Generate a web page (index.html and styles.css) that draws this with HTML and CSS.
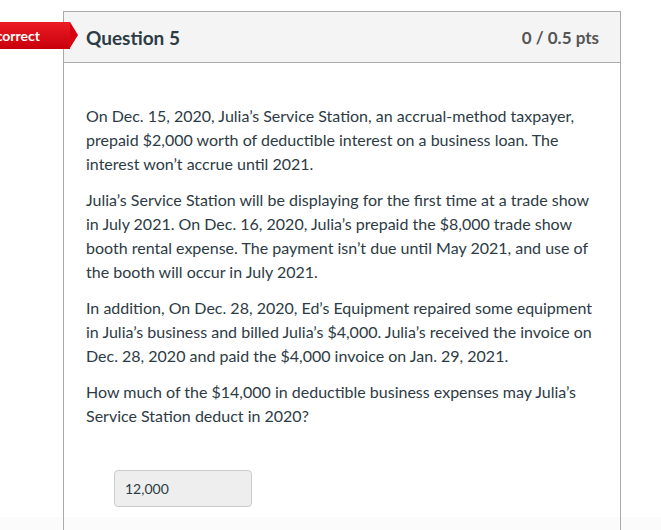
FILE: index.html
```html
<!DOCTYPE html>
<html lang="en">
<head>
  <meta charset="UTF-8">
  <title>Question 5</title>
  <link rel="stylesheet" href="styles.css">
</head>
<body>
  <div class="page">
    <div class="question">
      <div class="flag"><span>Incorrect</span></div>
      <div class="header">
        <span class="title">Question 5</span>
        <span class="pts">0 / 0.5 pts</span>
      </div>
      <div class="text">
        <p>On Dec. 15, 2020, Julia’s Service Station, an accrual-method taxpayer, prepaid $2,000 worth of deductible interest on a business loan. The interest won’t accrue until 2021.</p>
        <p>Julia’s Service Station will be displaying for the first time at a trade show in July 2021. On Dec. 16, 2020, Julia’s prepaid the $8,000 trade show booth rental expense. The payment isn’t due until May 2021, and use of the booth will occur in July 2021.</p>
        <p>In addition, On Dec. 28, 2020, Ed’s Equipment repaired some equipment in Julia’s business and billed Julia’s $4,000. Julia’s received the invoice on Dec. 28, 2020 and paid the $4,000 invoice on Jan. 29, 2021.</p>
        <p>How much of the $14,000 in deductible business expenses may Julia’s Service Station deduct in 2020?</p>
        <div class="answer">
          <div class="box">12,000</div>
        </div>
      </div>
    </div>
  </div>
  <div class="strip"></div>
</body>
</html>
```

FILE: styles.css
```css
body {
  margin: 0;
  background: #fff;
  font-family: Lato, "Noto Sans", sans-serif;
  color: #2d3b45;
  overflow: hidden;
}
.page {
  padding: 11px 0 0 63px;
}
.question {
  position: relative;
  width: 556px;
  border: 1px solid #aaa;
  border-bottom: none;
}
.flag {
  position: absolute;
  left: -64px;
  top: 10px;
  width: 70px;
  height: 27px;
  padding-right: 30px;
  box-sizing: border-box;
  display: flex;
  justify-content: flex-end;
  background: linear-gradient(#ec1c24, #c8000b);
  color: #fff;
  font-size: 14px;
  font-weight: 700;
  line-height: 27px;
  white-space: nowrap;
}
.flag span {
  flex-shrink: 0;
}
.flag::after {
  content: "";
  position: absolute;
  right: -8px;
  top: 0;
  border-left: 8px solid #d9000f;
  border-top: 13.5px solid transparent;
  border-bottom: 13.5px solid transparent;
}
.header {
  display: flex;
  justify-content: space-between;
  align-items: center;
  height: 50px;
  padding: 0 21px 0 22px;
  background: #f4f4f4;
  border-bottom: 1px solid #aaa;
}
.title {
  font-size: 19px;
  font-weight: 700;
  color: #2d3b45;
}
.pts {
  font-size: 17px;
  font-weight: 700;
  color: #555;
}
.text {
  padding: 41px 22px 40px 22px;
  font-size: 16px;
  line-height: 24px;
}
.text p {
  margin: 0 0 12px;
}
.answer {
  padding: 30px 0 0 28px;
}
.box {
  width: 126px;
  height: 35px;
  line-height: 35px;
  padding-left: 10px;
  background: #eee;
  border: 1px solid #ccc;
  border-radius: 4px;
  font-size: 14px;
}
.strip {
  position: absolute;
  left: 0;
  right: 0;
  top: 517px;
  height: 13px;
  background: #fbfbfb;
  z-index: -1;
}
```
